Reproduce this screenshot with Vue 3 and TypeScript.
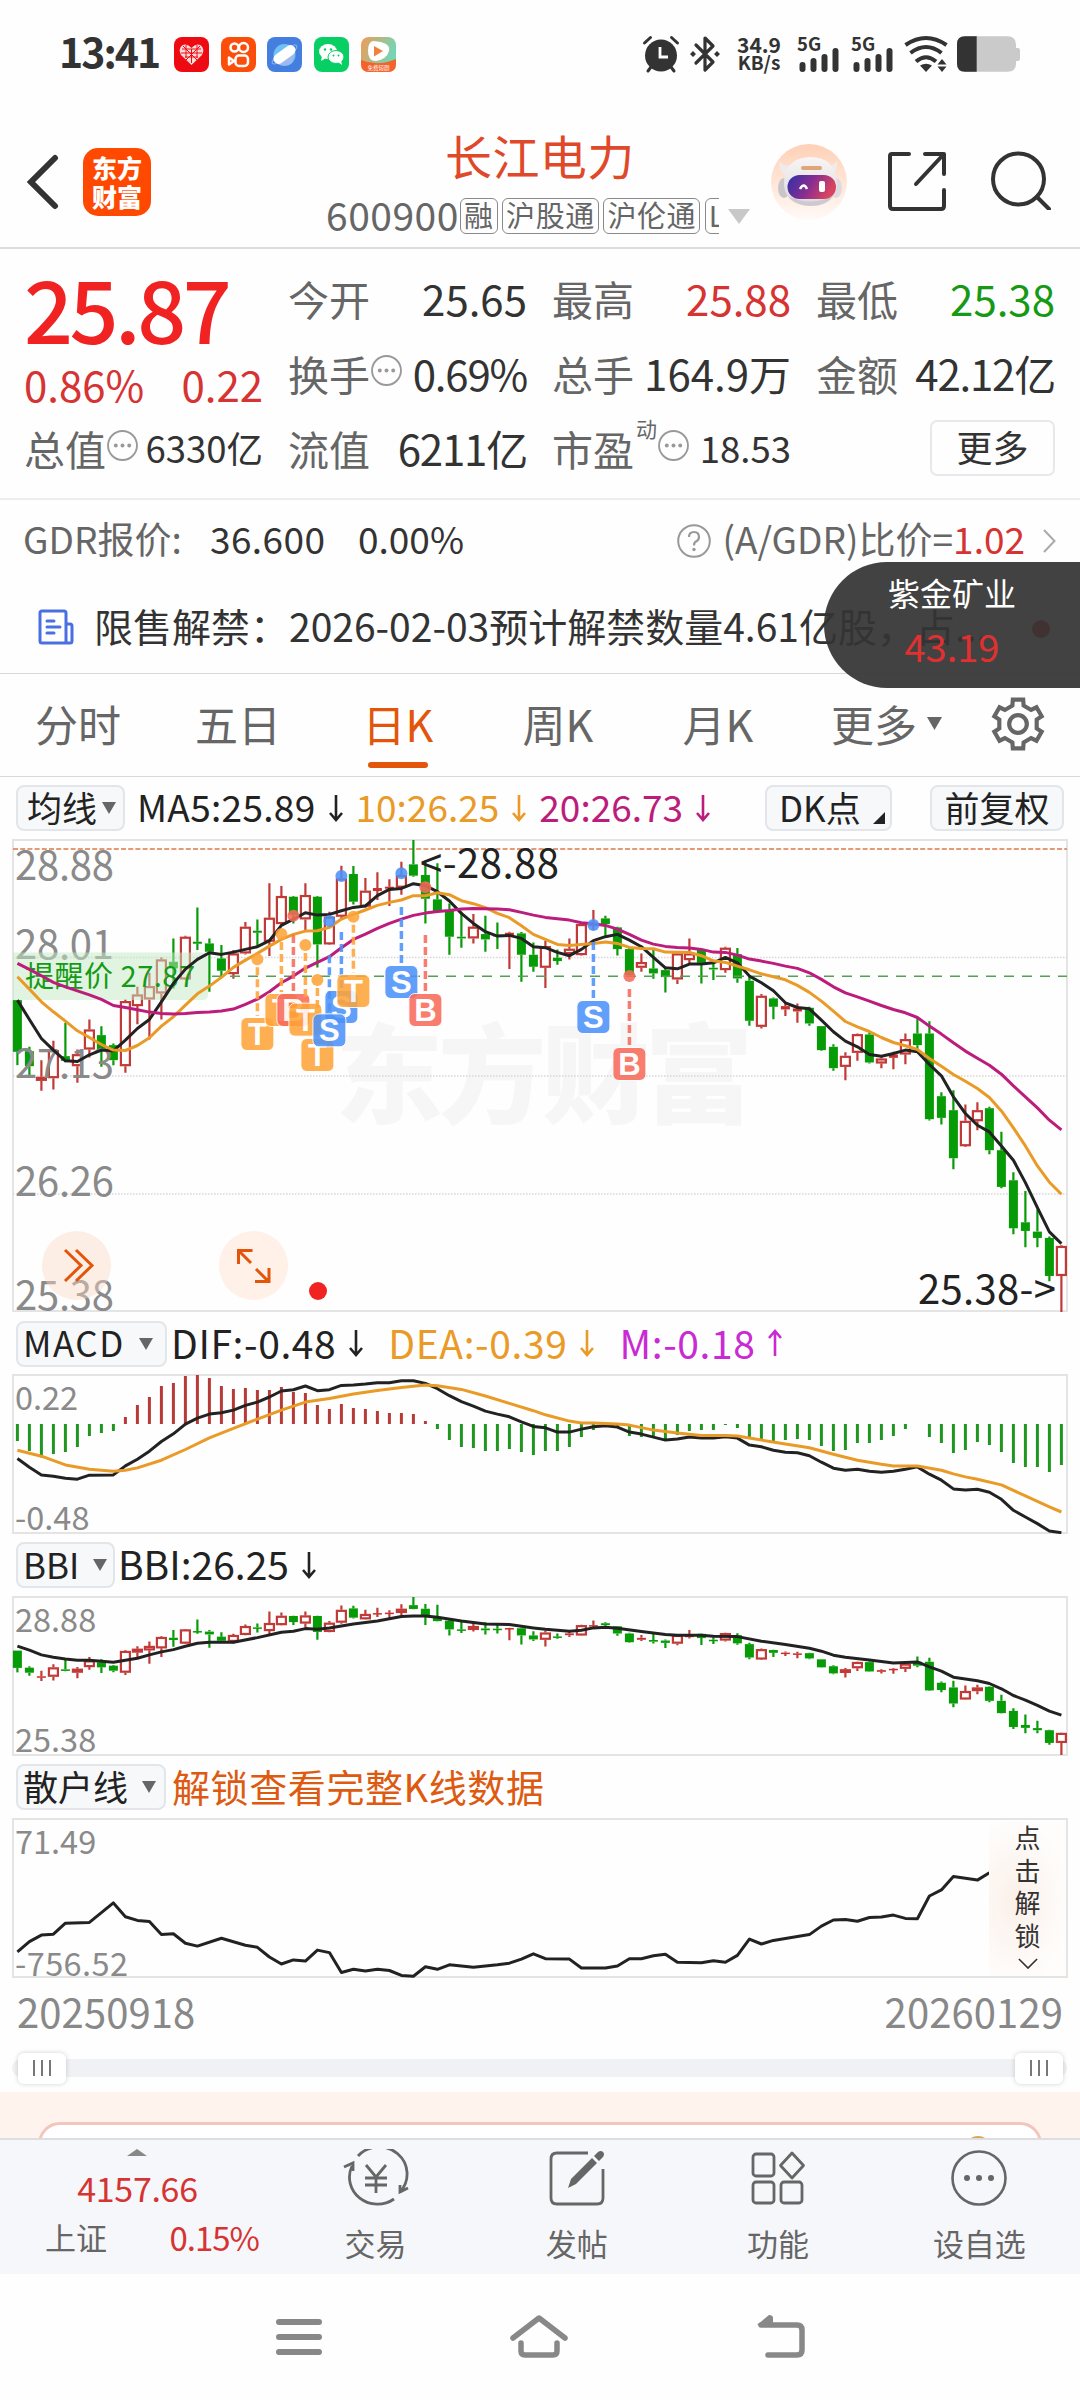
<template>
  <div class="screen">
    <header class="status">
      <span class="clock">13:41</span>
      <div class="apps">
        <svg viewBox="0 0 35 35">
          <rect width="35" height="35" rx="8" fill="#ee0a12" />
          <path
            d="M17.500 28 L7 18 Q4 12 8 8.500 Q13 5.500 17.500 11 Q22 5.500 27 8.500 Q31 12 28 18 Z"
            fill="#fbd9d9"
          />
          <path
            d="M8 12h19M7 16h21M11 20h13M12 8v13M17.500 12v14M23 8v13M9 9l14 14M26 9L12 23"
            stroke="#ee0a12"
            stroke-width="1"
            fill="none"
          />
        </svg>
        <svg viewBox="0 0 35 35">
          <rect width="35" height="35" rx="8" fill="#fb4e0b" />
          <g fill="none" stroke="#fff" stroke-width="2.500" stroke-linejoin="round">
            <circle cx="13.500" cy="10.500" r="4" />
            <circle cx="22.500" cy="10.500" r="4.500" />
            <rect x="14.500" y="18.500" width="12.500" height="10.500" rx="3.500" />
            <path d="M13 24l-5-3.500v7z" />
          </g>
        </svg>
        <svg viewBox="0 0 35 35">
          <rect width="35" height="35" rx="8" fill="#447fe0" />
          <circle cx="17.500" cy="18" r="11" fill="#6fc0f4" />
          <path d="M9 26 Q17 31 25 26 L28 15 Z" fill="#9db9ef" />
          <ellipse cx="17.500" cy="17.500" rx="15" ry="4" transform="rotate(-36 17.500 17.500)" fill="none" stroke="#8fb2ee" />
          <rect x="5" y="12.500" width="25" height="10" rx="5" transform="rotate(-36 17.500 17.500)" fill="#fff" />
        </svg>
        <svg viewBox="0 0 35 35">
          <rect width="35" height="35" rx="8" fill="#08cf63" />
          <ellipse cx="14" cy="14.500" rx="9" ry="7.500" fill="#fff" />
          <path d="M8 19l-1 5 5-3z" fill="#fff" />
          <ellipse cx="22" cy="20" rx="8" ry="6.500" fill="#fff" stroke="#08cf63" />
          <path d="M24 25l4 3-1-5z" fill="#fff" />
          <g fill="#08cf63">
            <circle cx="11" cy="12.500" r="1.200" /><circle cx="17" cy="12.500" r="1.200" />
            <circle cx="19.500" cy="18.500" r="1" /><circle cx="24.500" cy="18.500" r="1" />
          </g>
        </svg>
        <svg viewBox="0 0 35 35">
          <defs>
            <linearGradient id="video" x1="0" y1="0" x2="1" y2="0.4">
              <stop offset="0" stop-color="#f39a55" />
              <stop offset="1" stop-color="#6fd8b8" />
            </linearGradient>
          </defs>
          <rect width="35" height="35" rx="8" fill="url(#video)" />
          <path d="M0 23 Q17 30 35 22 V27 Q35 35 27 35 H8 Q0 35 0 27Z" fill="#f5622a" />
          <path d="M12 4 Q30 5 28 14 Q26 22 15 24 Q7 24 7 14 Q7 5 12 4Z" fill="#fff" />
          <path d="M13 9l9 5-9 5.500z" fill="#f0813f" />
          <text x="17.500" y="32.500" font-size="5.500" text-anchor="middle" fill="#fff">免费短剧</text>
        </svg>
      </div>
      <div class="system">
        <svg class="alarm" viewBox="0 0 36 36">
          <circle cx="18" cy="19.500" r="16" fill="#333" />
          <path d="M1.500 7l6-5.500M34.500 7l-6-5.500M5 35l3-4M31 35l-3-4" stroke="#333" stroke-width="3" stroke-linecap="round" />
          <path d="M17 11v10h8" fill="none" stroke="#fff" stroke-width="2.800" />
        </svg>
        <svg class="bluetooth" viewBox="0 0 30 36">
          <path d="M6 9l17 17-8 8V2l8 8L6 27" fill="none" stroke="#333" stroke-width="3.200" stroke-linejoin="round" stroke-linecap="round" />
          <path d="M3 15l3 3-3 3-3-3zM27 15l3 3-3 3-3-3z" fill="#333" />
        </svg>
        <div class="speed"><b>34.9</b><b>KB/s</b></div>
        <svg v-for="n in 2" :key="n" class="signal" viewBox="0 0 43 36">
          <text x="0" y="14.500" font-size="18.500" font-weight="700" fill="#333">5G</text>
          <g fill="#333">
            <rect x="2.500" y="26" width="6" height="10" rx="3" />
            <rect x="13.500" y="22" width="6" height="14" rx="3" />
            <rect x="24.500" y="18" width="6" height="18" rx="3" />
            <rect x="35.500" y="12" width="6" height="24" rx="3" />
          </g>
        </svg>
        <svg class="wifi" viewBox="0 0 44 36">
          <g fill="none" stroke="#333" stroke-width="4">
            <path d="M1.500 9 Q22 -5 42.500 9" /><path d="M6.500 17 Q22 5 37.500 17" />
            <path d="M12 25.500 Q22 17 32 25.500" />
          </g>
          <path d="M16 29.500q6-3.500 12 0l-6 6.500z M38 23l4.500 5.500h-9z M38 36l4.500-5.500h-9z" fill="#333" />
        </svg>
        <svg class="battery" viewBox="0 0 64 36">
          <path d="M0 8q0-8 8-8h43q9 0 9 9v3h2q2 0 2 3v7q0 3-2 3h-2v3q0 8-9 8H8q-8 0-8-8z" fill="#cacaca" />
          <path d="M20 0H8Q0 0 0 8v20q0 8 8 8h12z" fill="#333" />
        </svg>
      </div>
    </header>

    <nav class="titlebar">
      <svg class="back" viewBox="0 0 34 56">
        <path d="M29 4L5 28l24 24" fill="none" stroke="#333" stroke-width="6" stroke-linecap="round" />
      </svg>
      <div class="logo"><span>东方</span><span>财富</span></div>
      <div class="stock">
        <h1>长江电力</h1>
        <div class="code">
          <div class="code-clip">
            <span>600900</span>
            <i v-for="tag in stockTags" :key="tag">{{ tag }}</i>
          </div>
          <svg viewBox="0 0 22 15"><path d="M0 0h22L11 15z" fill="#c8c8c8" /></svg>
        </div>
      </div>
      <svg class="robot" viewBox="0 0 76 76">
        <defs>
          <linearGradient id="halo" x1="0" y1="0" x2="0" y2="1">
            <stop offset="0" stop-color="#ffd0b6" />
            <stop offset="1" stop-color="#fffaf7" />
          </linearGradient>
          <linearGradient id="visor" x1="0" y1="0" x2="1" y2="0.3">
            <stop offset="0" stop-color="#2c31a8" />
            <stop offset="0.55" stop-color="#8a2d90" />
            <stop offset="1" stop-color="#d84560" />
          </linearGradient>
          <linearGradient id="shell" x1="0" y1="0" x2="0" y2="1">
            <stop offset="0" stop-color="#f8f5f5" />
            <stop offset="1" stop-color="#dcd8de" />
          </linearGradient>
        </defs>
        <circle cx="38" cy="38" r="38" fill="url(#halo)" />
        <path d="M8 17q4 6 13 4l-6 10Q8 28 8 17zM66 17q-4 6-12 4l6 10q7-3 6-14z" fill="#efebec" />
        <ellipse cx="13" cy="44" rx="6" ry="10" fill="#c9c5c9" />
        <ellipse cx="65" cy="44" rx="6" ry="10" fill="#dedade" />
        <path d="M13 40Q13 14 39 13q26 0 27 27 0 20-27 22-25-1-26-22z" fill="url(#shell)" />
        <path d="M17 52q22 11 45 0-6 10-23 10-16-1-22-10z" fill="#cdc9d0" />
        <rect x="30" y="22" width="21" height="4" rx="2" fill="#dfa677" />
        <rect x="16.500" y="31" width="48.500" height="24" rx="12" fill="url(#visor)" />
        <path d="M29 45q4-7 7 0" fill="none" stroke="#fff" stroke-width="2.500" />
        <rect x="48" y="37" width="6" height="11" rx="2" fill="#fff" />
      </svg>
      <svg class="share" viewBox="0 0 58 60">
        <g fill="none" stroke="#333" stroke-width="4" stroke-linecap="round" stroke-linejoin="round">
          <path d="M21 3H4q-2 0-2 2v50q0 3 3 3h48q3 0 3-3V39" />
          <path d="M37 3h19v20M55 4L28 33" />
        </g>
      </svg>
      <svg class="search" viewBox="0 0 60 60">
        <g fill="none" stroke="#333" stroke-width="4" stroke-linecap="round">
          <circle cx="27.500" cy="29" r="25.500" /><path d="M46 47l12 12" />
        </g>
      </svg>
    </nav>

    <section class="quote">
      <div class="column">
        <strong class="price">25.87</strong>
        <p class="change"><span>0.86%</span><span>0.22</span></p>
        <p class="cell small">
          <label>总值</label><svg class="more-dots" viewBox="0 0 30 30"><use href="#dots" /></svg><span>6330亿</span>
        </p>
      </div>
      <div v-for="(column, c) of quoteColumns" :key="c" class="column">
        <p v-for="cell of column" :key="cell.label" class="cell" :class="[cell.tone, { small: cell.sup }]">
          <label>{{ cell.label }}</label>
          <sup v-if="cell.sup">{{ cell.sup }}</sup>
          <svg v-if="cell.hint" class="more-dots" viewBox="0 0 30 30"><use href="#dots" /></svg>
          <span>{{ cell.value }}</span>
        </p>
        <button v-if="c === 2" class="more">更多</button>
      </div>
      <svg width="0" height="0" class="defs">
        <symbol id="dots" viewBox="0 0 30 30">
          <circle cx="15" cy="15" r="14" fill="none" stroke="#999" stroke-width="1.800" />
          <g fill="#999"><circle cx="8.500" cy="15" r="1.900" /><circle cx="15" cy="15" r="1.900" /><circle cx="21.500" cy="15" r="1.900" /></g>
        </symbol>
      </svg>
    </section>

    <section class="gdr">
      <label>GDR报价:</label><span class="gdr-price">36.600</span><span>0.00%</span>
      <div class="ratio">
        <svg class="help" viewBox="0 0 34 34">
          <circle cx="17" cy="17" r="15.800" fill="none" stroke="#999" stroke-width="2" />
          <path d="M12 13q0-5 5-5t5 5q0 3-3 4.500-2 1-2 4" fill="none" stroke="#999" stroke-width="2.200" />
          <circle cx="17" cy="25.500" r="1.700" fill="#999" />
        </svg>
        <span>(A/GDR)比价=</span><b>1.02</b>
        <svg class="chevron" viewBox="0 0 13 24"><path d="M1 1l10.500 11L1 23" fill="none" stroke="#aaa" stroke-width="2" /></svg>
      </div>
    </section>

    <section class="news">
      <svg viewBox="0 0 36 36">
        <g fill="none" stroke="#4a6fe0" stroke-width="3" stroke-linejoin="round" stroke-linecap="round">
          <path d="M4 2h22q2 0 2 2v30H4q-2 0-2-2V4q0-2 2-2z M28 15h4q2 0 2 2v15q0 2-2 2h-4" />
          <path d="M9 12h7M9 18h13M9 24h7" />
        </g>
      </svg>
      <p>限售解禁：2026-02-03预计解禁数量4.61亿股，占...</p>
      <span class="dot"></span>
    </section>
    <aside class="floating"><span>紫金矿业</span><b>43.19</b></aside>

    <nav class="tabs">
      <button v-for="tab in tabs" :key="tab" :class="{ active: tab === activeTab }" @click="activeTab = tab">
        {{ tab }}
        <svg v-if="tab === '更多'" viewBox="0 0 15 13"><path d="M0 0h15L7.500 13z" fill="#666" /></svg>
      </button>
      <svg class="gear" viewBox="0 0 52 52">
        <g fill="none" stroke="#666" stroke-width="4">
          <path :d="gearPath" /><circle cx="26" cy="26" r="8.500" />
        </g>
      </svg>
    </nav>

    <div class="legend main-legend">
      <button class="picker tight"><span>均线</span><i class="caret"></i></button>
      <span v-for="ma in averages" :key="ma.text" class="ma" :style="{ color: ma.color }">
        {{ ma.text }}<svg class="arrow" viewBox="0 0 16 28"><path :d="arrowDown" /></svg>
      </span>
      <button class="picker dk"><span>DK点</span><i class="corner"></i></button>
      <button class="picker adjust"><span>前复权</span></button>
    </div>
    <svg class="plot" width="1056" height="474" viewBox="0 0 1056 474">
      <text class="watermark" x="323" y="276" textLength="418">东方财富</text>
      <rect class="frame" x="1" y="1" width="1054" height="471" />
      <path class="grid" d="M1 118.500H1055M1 237H1055M1 355H1055" />
      <path class="limit" d="M1 10H1055" />
      <g v-for="(candle, i) of candles" :key="i" :class="candle.up ? 'up' : 'down'">
        <path :d="wick(candle, i, 1, 472)" />
        <rect v-bind="body(candle, i, 1, 472)" />
      </g>
      <text class="axis" v-for="label of priceLabels" :key="label.text" x="3" :y="label.y" textLength="99">{{ label.text }}</text>
      <path class="alert-line" d="M200 137.300H1055" />
      <path class="alert-tag" d="M1 113.500h189q6 0 6 6v35.500q0 6-6 6H1z" />
      <text class="alert-text" x="13" y="147.500" textLength="170">提醒价 27.87</text>
      <polyline v-for="ma of averages" :key="ma.color" class="line" :points="series(ma.points, 60, 1475, 1, 472)" :stroke="ma.color" />
      <g v-for="pin of pins" :key="pin.i" opacity="0.87">
        <circle :cx="x(pin.i)" :cy="px(pin.dot)" r="6" :fill="pinColors[pin.kind]" />
        <path
          :d="`M${x(pin.i)} ${Math.max(px(pin.dot) + 8, px(pin.badge) - 75)}V${px(pin.badge) - 18}`"
          :stroke="pinColors[pin.kind]"
          stroke-width="3.500"
          stroke-dasharray="8 4"
        />
        <rect :x="x(pin.i) - 16.500" :y="px(pin.badge) - 16.500" width="33" height="33" rx="6" :fill="pinColors[pin.kind]" stroke="#fff" />
        <text class="pin-text" :x="x(pin.i)" :y="px(pin.badge) + 11">{{ pin.kind }}</text>
      </g>
      <text class="extreme" x="408" y="39" textLength="139">&lt;-28.88</text>
      <text class="extreme" x="906" y="465" textLength="138">25.38-&gt;</text>
      <g fill="none" stroke="#e2550a" stroke-width="3">
        <circle cx="64.500" cy="426.500" r="34.500" fill="#fdd8c4" fill-opacity="0.42" stroke="none" />
        <circle cx="241.500" cy="426.500" r="34.500" fill="#fff0e8" stroke="none" />
        <path d="M53 411l16 15.500-16 15.500M64 411l16 15.500-16 15.500" />
        <path d="M226.500 425v-13.500h14M227 412l12 12M257 429v13.500h-14M256 442l-12-12" />
      </g>
      <circle cx="306" cy="452" r="9" fill="#f02222" />
    </svg>

    <div class="legend macd-legend">
      <button class="picker macd"><span>MACD</span><i class="caret"></i></button>
      <span v-for="item in macdLegend" :key="item.text" class="value" :style="{ color: item.color }">
        {{ item.text }}<svg class="arrow" viewBox="0 0 16 28"><path :d="item.rising ? arrowUp : arrowDown" /></svg>
      </span>
    </div>
    <svg class="plot" width="1056" height="160" viewBox="0 0 1056 160">
      <rect class="frame" x="1" y="1" width="1054" height="158" />
      <text class="axis minor" x="3" y="35.500">0.22</text>
      <text class="axis minor" x="3" y="155.500">-0.48</text>
      <path
        v-for="(bar, i) of macdBars"
        :key="i"
        :d="`M${x(i)} 50V${1 + (bar - 195) / 3}`"
        :stroke="bar < 342 ? '#b83a36' : '#1f961f'"
        stroke-width="3"
      />
      <polyline class="line" :points="series(dif, 195, 668, 1, 158)" stroke="#222" />
      <polyline class="line" :points="series(dea, 195, 668, 1, 158)" stroke="#ea9a26" />
    </svg>

    <div class="legend">
      <button class="picker bbi"><span>BBI</span><i class="caret"></i></button>
      <span class="value">BBI:26.25<svg class="arrow" viewBox="0 0 16 28"><path :d="arrowDown" /></svg></span>
    </div>
    <svg class="plot" width="1056" height="160" viewBox="0 0 1056 160">
      <rect class="frame" x="1" y="1" width="1054" height="158" />
      <text class="axis minor" x="3" y="35.500">28.88</text>
      <text class="axis minor" x="3" y="155.500">25.38</text>
      <g v-for="(candle, i) of candles" :key="i" :class="candle.up ? 'up' : 'down'">
        <path :d="wick(candle, i, 1, 158)" />
        <rect v-bind="body(candle, i, 1, 158)" />
      </g>
      <polyline class="line" :points="series(bbi, 860, 1335, 1, 158)" stroke="#222" />
    </svg>

    <div class="legend">
      <button class="picker"><span>散户线</span><i class="caret"></i></button>
      <span class="unlock">解锁查看完整K线数据</span>
    </div>
    <div class="retail">
      <svg class="plot" width="1056" height="160" viewBox="0 0 1056 160">
        <rect class="frame" x="1" y="1" width="1054" height="158" />
        <text class="axis minor" x="3" y="36">71.49</text>
        <text class="axis minor" x="3" y="157.500" textLength="113">-756.52</text>
        <polyline class="line" :points="series(retail, 144, 532, 1, 158)" stroke="#222" />
      </svg>
      <div class="locked">
        <span v-for="ch in '点击解锁'" :key="ch">{{ ch }}</span>
        <svg viewBox="0 0 22 12"><path d="M1 1l10 10L21 1" fill="none" stroke="#333" stroke-width="1.800" /></svg>
      </div>
    </div>

    <div class="dates"><span>20250918</span><span>20260129</span></div>
    <div class="range">
      <span class="handle"><i></i><i></i><i></i></span>
      <span class="handle"><i></i><i></i><i></i></span>
    </div>
    <div class="promo"><div class="promo-card"><i></i></div></div>

    <footer class="actions">
      <div class="index">
        <i class="up-caret"></i>
        <b>4157.66</b>
        <p><span>上证</span><em>0.15%</em></p>
      </div>
      <div class="action">
        <svg viewBox="0 0 66 58">
          <g fill="none" stroke="#666" stroke-width="2.800">
            <path d="M15 7A28 27 0 0 1 57 43M51 50A28 27 0 0 1 9 17" />
            <path d="M1 18l9-4v8M65 39l-8 4v-7" />
            <path d="M23 16l10 12 10-12M33 28v16M22 29h22M22 36h22" />
          </g>
        </svg>
        交易
      </div>
      <div class="action">
        <svg viewBox="0 0 66 58">
          <g fill="none" stroke="#666" stroke-width="2.800">
            <path d="M44 4H13q-6 0-6 6v39q0 6 6 6h40q6 0 6-6V20" />
          </g>
          <path d="M24 39l3-9L48 9l5 5-21 21zM50 7l4-4q3-2 5 0t0 5l-4 4z" fill="#666" />
        </svg>
        发帖
      </div>
      <div class="action">
        <svg viewBox="0 0 66 58">
          <g fill="none" stroke="#666" stroke-width="2.800">
            <rect x="8" y="5" width="21" height="22" rx="3" />
            <rect x="8" y="33" width="21" height="21" rx="3" />
            <rect x="36" y="33" width="21" height="21" rx="3" />
            <path d="M47 4l11.500 12.500L47 29 35.500 16.500z" stroke-linejoin="round" />
          </g>
        </svg>
        功能
      </div>
      <div class="action">
        <svg viewBox="0 0 66 58">
          <circle cx="33" cy="29" r="26.500" fill="none" stroke="#666" stroke-width="2.600" />
          <g fill="#666"><circle cx="21" cy="29" r="3" /><circle cx="33" cy="29" r="3" /><circle cx="45" cy="29" r="3" /></g>
        </svg>
        设自选
      </div>
    </footer>

    <nav class="android">
      <svg width="46" height="46" viewBox="0 0 46 46">
        <path d="M3 8h40M3 23h40M3 38h40" stroke="#888" stroke-width="6" stroke-linecap="round" />
      </svg>
      <svg width="58" height="46" viewBox="0 0 58 46">
        <g fill="none" stroke="#888" stroke-width="5.500" stroke-linecap="round" stroke-linejoin="round">
          <path d="M3 24L29 4l26 20M11 29v8q0 4 4 4h28q4 0 4-4v-8" />
        </g>
      </svg>
      <svg width="50" height="46" viewBox="0 0 50 46">
        <g fill="none" stroke="#888" stroke-width="5.500" stroke-linecap="round" stroke-linejoin="round">
          <path d="M12 41h29q5 0 5-5V16q0-5-5-5H5" />
        </g>
        <path d="M1 11L13 1q4 0 4 3v8z" fill="#888" />
      </svg>
    </nav>
  </div>
</template>

<script setup lang="ts">
import { ref } from "vue";

interface Candle {
  up: boolean;
  high: number;
  top: number;
  bottom: number;
  low: number;
}
interface QuoteCell {
  label: string;
  value: string;
  tone?: string;
  hint?: boolean;
  sup?: string;
}

const stockTags = ["融", "沪股通", "沪伦通", "LOF"];
const tabs = ["分时", "五日", "日K", "周K", "月K", "更多"];
const activeTab = ref("日K");

const quoteColumns: QuoteCell[][] = [
  [
    { label: "今开", value: "25.65" },
    { label: "换手", value: "0.69%", hint: true, tone: "tight-value" },
    { label: "流值", value: "6211亿", tone: "tight-value" },
  ],
  [
    { label: "最高", value: "25.88", tone: "red" },
    { label: "总手", value: "164.9万" },
    { label: "市盈", value: "18.53", sup: "动", hint: true },
  ],
  [
    { label: "最低", value: "25.38", tone: "green" },
    { label: "金额", value: "42.12亿", tone: "tight-value" },
  ],
];

const arrowDown = "M8 1v25M2 19l6 7 6-7";
const arrowUp = "M8 27V2M2 9l6-7 6 7";

// Six teeth: two points on the tip, two in the valley after it
const gearPath =
  Array.from({ length: 6 }, (_, k) => {
    const at = (deg: number, r: number) => {
      const a = ((k * 60 + deg - 90) * Math.PI) / 180;
      return `${(26 + r * Math.cos(a)).toFixed(1)} ${(26 + r * Math.sin(a)).toFixed(1)}`;
    };
    return `${k ? "L" : "M"}${at(-12, 24)}L${at(12, 24)}L${at(17, 18.5)}L${at(43, 18.5)}`;
  }).join("") + "Z";

// Chart units run downwards: 60 is the period high (28.88), 1475 the low (25.38)
const UNIT_TOP = 60,
  UNIT_BOTTOM = 1475;

// direction, high, body top, body bottom, low
const candles: Candle[] = `
G 540 540 695 735|G 680 693 738 765|R 720 770 782 812|R 662 690 774 808|G 608 708 722 726|R 688 702 738 788
R 598 628 688 712|G 618 645 690 740|G 670 675 720 735|R 538 543 738 758|R 500 523 558 612|R 458 498 538 658
R 412 418 520 598|G 355 425 445 505|R 347 350 478 480|G 262 365 371 390|G 355 370 395 515|G 375 415 452 470
R 390 400 462 476|R 306 320 400 403|G 298 332 338 378|R 190 293 365 408|R 198 228 312 316|G 228 230 285 310
R 190 225 298 335|G 228 230 373 442|R 275 290 373 375|R 137 175 290 300|G 138 162 245 253|R 174 212 260 262
R 157 204 213 240|R 178 200 206 258|R 125 165 203 224|G 60 133 167 170|G 122 165 236 310|G 130 238 276 278
G 250 272 350 404|G 275 350 355 383|R 282 320 355 370|G 287 342 358 395|G 307 344 349 387|R 335 338 346 447
G 336 340 404 485|G 367 404 440 455|R 362 378 443 504|G 388 413 423 434|R 355 386 402 418|R 308 312 405 406
R 270 312 318 330|G 287 295 312 347|G 320 322 387 406|G 380 387 465 470|R 400 426 443 455|G 390 445 460 476
G 440 450 471 517|R 395 400 478 492|R 355 400 420 432|G 387 390 428 490|G 420 443 448 480|R 380 383 450 458
G 384 402 475 488|G 470 482 602 617|R 522 527 620 625|G 532 535 560 597|R 548 558 568 588|R 550 565 574 608
G 560 563 610 617|G 618 618 690 692|G 672 680 744 752|R 696 707 740 780|R 640 642 698 722|G 638 643 727 730
R 708 715 730 744|R 695 703 713 747|R 640 657 703 732|G 592 640 675 690|G 603 640 897 901|G 816 828 893 913
G 810 870 1014 1047|R 853 902 978 980|R 846 870 903 930|G 860 864 990 1002|G 935 990 1100 1104|G 1056 1080 1224 1242
G 1112 1206 1232 1281|G 1168 1234 1253 1281|G 1249 1253 1367 1383|R 1275 1277 1367 1475`
  .trim()
  .split(/[|\n]/)
  .map((row) => {
    const [kind, ...v] = row.split(" ");
    const [high, top, bottom, low] = v.map(Number);
    return { up: kind === "R", high, top, bottom, low };
  });

// Every series below is a list of "candle index,value"; gaps are interpolated by the line
const ma5 =
  "0,540 1,598 2,655 3,690 4,722 5,724 6,704 7,690 8,692 9,660 10,625 11,598 12,545 13,490 14,447 15,418 16,398 17,403 18,396 19,388 20,380 21,362 22,316 23,297 24,278 25,285 26,283 27,272 28,262 29,258 30,227 31,208 32,205 33,191 34,197 35,215 36,243 37,280 38,310 39,335 40,348 41,346 42,355 43,380 44,383 45,397 46,407 47,388 48,362 49,350 50,343 51,360 52,380 53,412 54,443 55,446 56,432 57,432 58,428 59,412 60,428 61,468 62,488 63,512 64,548 65,562 66,566 67,600 68,635 69,663 70,680 71,703 72,708 73,700 74,690 75,695 76,733 77,767 78,830 79,880 80,915 81,935 82,977 83,1020 84,1087 85,1162 86,1235 87,1270";
const ma10 =
  "0,470 1,507 2,545 3,575 4,603 5,632 6,652 7,673 8,690 9,691 10,676 11,653 12,618 13,590 14,555 15,521 16,498 17,472 18,442 19,420 20,400 21,378 22,358 23,343 24,333 25,332 26,322 27,297 28,283 29,270 30,256 31,247 32,240 33,227 34,227 35,218 36,224 37,242 38,251 39,263 40,280 41,293 42,317 43,343 44,358 45,373 46,376 47,373 48,370 49,366 50,370 51,382 52,385 53,386 54,396 56,397 57,407 58,422 59,427 60,438 61,449 62,461 63,470 64,479 65,496 66,517 67,543 68,573 69,604 70,620 71,634 72,652 73,667 74,677 75,688 76,715 77,738 78,763 79,783 80,805 81,832 82,872 83,923 84,977 85,1037 86,1086 87,1122";
const ma20 =
  "0,430 1,448 2,467 3,487 4,500 5,512 6,524 7,538 8,556 9,562 10,569 11,576 12,580 13,582 14,580 15,577 16,576 17,573 18,567 19,553 20,537 21,515 22,488 23,468 24,444 25,427 26,410 27,383 28,358 29,342 30,325 31,310 32,297 33,286 34,279 35,274 36,271 37,267 38,265 40,267 41,269 42,277 43,285 44,292 45,296 46,300 47,308 48,311 49,316 50,327 51,343 52,360 53,372 54,379 55,382 56,384 57,388 58,396 59,397 60,405 61,417 62,423 63,430 64,438 65,445 66,458 67,478 68,500 69,518 70,530 71,543 72,556 73,568 74,578 75,592 76,618 77,642 78,668 79,693 80,714 81,735 82,762 83,797 84,830 85,863 86,900 87,929";
const dif =
  "0,445 1,471 2,494 3,498 4,504 5,507 6,495 8,494 9,467 10,447 11,423 12,394 13,371 14,342 15,324 16,312 17,308 18,300 19,286 20,276 21,261 22,243 23,239 24,228 25,242 26,239 27,226 28,225 29,222 30,218 31,218 32,212 33,212 34,220 35,236 36,257 37,275 38,288 39,303 40,312 41,320 42,335 43,349 44,353 45,366 46,366 47,357 48,350 49,347 50,351 51,366 52,372 53,381 54,390 55,387 56,381 57,384 58,384 59,380 60,384 61,405 62,410 63,420 64,426 65,428 66,437 67,456 68,474 69,480 70,477 71,483 72,486 73,483 74,477 75,470 76,492 77,510 78,536 79,539 80,537 81,546 82,567 83,600 84,620 85,640 86,662 87,667";
const dea =
  "0,420 2,438 4,464 6,477 8,483 9,480 10,473 12,450 14,418 16,383 18,355 20,327 22,300 24,276 26,265 28,252 30,241 32,232 34,225 35,227 37,238 39,258 41,280 43,302 44,314 46,333 47,339 48,339 50,342 51,345 53,360 55,369 57,376 59,376 60,378 62,390 64,402 66,413 68,432 70,450 72,462 73,467 75,467 77,480 78,491 79,500 80,507 82,524 84,557 86,590 87,605";
const bbi =
  "0,1008 1,1020 2,1034 3,1041 4,1046 5,1050 6,1050 7,1053 8,1056 9,1050 10,1044 11,1034 12,1025 13,1018 14,1008 15,999 16,996 18,996 20,982 22,966 23,963 24,955 25,957 26,953 28,941 30,932 32,919 33,917 34,917 35,921 37,932 39,941 41,943 43,953 44,957 46,963 47,960 48,953 49,951 50,954 52,964 54,973 55,975 57,975 58,978 60,979 62,993 64,1003 66,1014 67,1023 68,1035 69,1041 71,1049 73,1058 75,1055 76,1070 77,1083 78,1101 80,1112 81,1120 82,1136 83,1156 84,1170 85,1186 86,1203 87,1215";
const retail =
  "0,470 1,445 2,429 3,427 4,400 6,398 7,374 8,350 9,384 10,393 11,396 12,428 13,426 14,449 15,456 17,437 19,454 20,459 21,483 22,500 23,490 24,493 25,466 26,472 27,521 28,513 29,517 30,513 31,516 32,528 33,530 34,507 35,513 36,502 38,508 40,502 41,498 42,488 43,475 44,487 46,488 47,510 49,510 50,505 51,487 52,487 53,480 54,476 55,496 57,497 58,492 59,496 60,479 61,439 62,451 63,442 66,428 67,407 68,392 69,391 70,395 71,386 72,385 73,380 74,388 75,389 76,333 77,318 78,285 80,294 81,276";
const macdBars = [
  393, 423, 442, 432, 426, 411, 378, 369, 363, 321, 285, 261, 228, 219, 198,
  195, 204, 228, 237, 234, 240, 240, 231, 246, 249, 285, 297, 282, 294, 297,
  303, 309, 309, 312, 333, 357, 390, 411, 414, 423, 423, 417, 426, 435, 423,
  423, 411, 381, 360, 345, 354, 378, 381, 381, 390, 375, 363, 360, 360, 345,
  354, 384, 387, 393, 390, 387, 390, 408, 423, 420, 399, 399, 390, 378, 357,
  342, 381, 399, 429, 420, 396, 405, 426, 459, 471, 471, 486, 465,
];

const averages = [
  { text: "MA5:25.89", color: "#222", points: ma5 },
  { text: "10:26.25", color: "#ea9a26", points: ma10 },
  { text: "20:26.73", color: "#bc1c7c", points: ma20 },
];
const macdLegend = [
  { text: "DIF:-0.48", color: "#222", rising: false },
  { text: "DEA:-0.39", color: "#ea9a26", rising: false },
  { text: "M:-0.18", color: "#c92bd3", rising: true },
];
const priceLabels = [
  { text: "28.88", y: 40.5 },
  { text: "28.01", y: 120 },
  { text: "27.13", y: 238.5 },
  { text: "26.26", y: 356.5 },
  { text: "25.38", y: 470.5 },
];

const pinColors: Record<string, string> = {
  T: "#ffa438",
  B: "#f96a5a",
  S: "#4c92fa",
};
const pins = [
  { kind: "T", i: 20, dot: 418, badge: 642 },
  { kind: "T", i: 22, dot: 342, badge: 570 },
  { kind: "B", i: 23, dot: 287, badge: 570 },
  { kind: "T", i: 24, dot: 375, badge: 599 },
  { kind: "T", i: 25, dot: 480, badge: 705 },
  { kind: "S", i: 27, dot: 168, badge: 561 },
  { kind: "S", i: 26, dot: 303, badge: 631 },
  { kind: "T", i: 28, dot: 290, badge: 513 },
  { kind: "S", i: 32, dot: 160, badge: 486 },
  { kind: "B", i: 34, dot: 202, badge: 570 },
  { kind: "S", i: 48, dot: 315, badge: 591 },
  { kind: "B", i: 51, dot: 468, badge: 732 },
];

function x(i: number): number {
  return 5.4 + i * 12;
}
function px(unit: number): number {
  return 1 + (unit - UNIT_TOP) / 3;
}
function y(unit: number, top: number, height: number): number {
  return top + ((unit - UNIT_TOP) / (UNIT_BOTTOM - UNIT_TOP)) * height;
}
function wick(c: Candle, i: number, top: number, height: number): string {
  const at = (unit: number) => y(unit, top, height);
  return `M${x(i)} ${at(c.high)}V${at(c.top)}M${x(i)} ${at(c.bottom)}V${at(c.low)}`;
}
function body(c: Candle, i: number, top: number, height: number) {
  const from = y(c.top, top, height);
  const size = Math.max(y(c.bottom, top, height) - from, 1.5);
  const inset = c.up && size > 3.5 ? 1 : 0;
  return {
    x: x(i) - 4.5,
    y: from + inset,
    width: 9,
    height: size - inset * 2,
    class: inset ? "hollow" : "solid",
  };
}
function series(points: string, from: number, to: number, top: number, height: number): string {
  return points
    .split(" ")
    .map((pair) => {
      const [i, v] = pair.split(",").map(Number);
      return `${x(i)},${(top + ((v - from) / (to - from)) * height).toFixed(1)}`;
    })
    .join(" ");
}
</script>

<style>
body {
  background: #fff;
}
</style>

<style scoped>
.screen {
  width: 1080px;
  height: 2400px;
  position: relative;
  overflow: hidden;
  background: #fefefe;
  color: #333;
  font-family: "Noto Sans CJK SC", "Noto Sans", sans-serif;
}
.screen p,
.screen h1 {
  margin: 0;
  font-weight: 400;
}
button {
  border: none;
  background: none;
  padding: 0;
  font: inherit;
  color: inherit;
}
i,
em {
  font-style: normal;
}
svg {
  display: block;
  flex: none;
}
.status {
  height: 108px;
  display: flex;
  align-items: center;
  padding: 0 60px 0 59px;
  box-sizing: border-box;
}
.clock {
  width: 115px;
  font: 700 41px/60px "Noto Sans CJK SC", sans-serif;
  letter-spacing: -2px;
  margin-top: -8px;
}
.apps {
  display: flex;
  gap: 11.700px;
}
.apps svg {
  width: 35px;
  height: 35px;
}
.system {
  margin-left: auto;
  display: flex;
  align-items: center;
}
.system svg {
  height: 36px;
  overflow: visible;
}
.alarm {
  width: 36px;
}
.bluetooth {
  width: 30px;
  margin-left: 11px;
}
.speed {
  width: 48px;
  margin-left: 15px;
  display: flex;
  flex-direction: column;
  align-items: center;
  font-size: 21px;
  line-height: 18px;
  margin-top: -3px;
}
.speed b + b {
  font-size: 19px;
}
.signal {
  width: 43px;
  margin-left: 11px;
}
.speed + .signal {
  margin-left: 14px;
}
.wifi {
  width: 44px;
  margin-left: 10px;
}
.battery {
  width: 63px;
  margin-left: 9px;
}
.titlebar {
  height: 141px;
  box-sizing: border-box;
  border-bottom: 2px solid #dcdcdc;
  display: flex;
  align-items: flex-start;
}
.back {
  width: 34px;
  height: 56px;
  margin: 46px 0 0 26px;
}
.logo {
  width: 68px;
  height: 68px;
  margin: 40px 0 0 23px;
  border-radius: 15px;
  background: #ff4800;
  color: #fff;
  display: flex;
  flex-direction: column;
  align-items: center;
  justify-content: center;
  font-size: 25px;
  font-weight: 900;
  line-height: 29px;
}
.stock {
  width: 425px;
  margin-left: 175px;
}
.stock h1 {
  padding-left: 119px;
  margin-top: 15px;
  font-size: 47px;
  line-height: 64px;
  letter-spacing: 0.4px;
  color: #e0482a;
}
.code {
  display: flex;
  align-items: center;
  margin-top: 7px;
  color: #666;
}
.code-clip {
  width: 393px;
  height: 44px;
  display: flex;
  align-items: center;
  overflow: hidden;
  white-space: nowrap;
}
.code span {
  font-size: 39px;
  line-height: 44px;
  width: 134px;
  letter-spacing: 0.5px;
  flex: none;
  margin-top: -5px;
}
.code i {
  height: 36px;
  box-sizing: border-box;
  border: 1.500px solid #8a8a8a;
  border-radius: 6px;
  font-size: 29px;
  line-height: 31px;
  letter-spacing: 0.6px;
  padding: 0 3px;
  margin-right: 4.500px;
}
.code svg {
  width: 22px;
  height: 15px;
  margin-left: 9px;
}
.robot {
  width: 76px;
  height: 76px;
  margin: 36px 0 0 20px;
}
.share {
  width: 58px;
  height: 60px;
  margin: 43px 0 0 41px;
}
.search {
  width: 60px;
  height: 60px;
  margin: 42px 0 0 45px;
}
.quote {
  height: 251px;
  padding: 13px 24px 0 24px;
  box-sizing: border-box;
  display: grid;
  grid-template-columns: 239px repeat(3, 239px);
  column-gap: 25px;
  border-bottom: 2px solid #ededed;
}
.defs {
  position: absolute;
}
.column {
  display: flex;
  flex-direction: column;
}
.price {
  height: 96px;
  font-size: 86px;
  font-weight: 500;
  line-height: 90px;
  letter-spacing: -3.500px;
  color: #f02222;
}
.change {
  height: 54px;
  display: flex;
  justify-content: space-between;
  color: #d63333;
  font-size: 42px;
  line-height: 52px;
}
.cell {
  height: 75px;
  display: flex;
  align-items: center;
  white-space: nowrap;
  line-height: 68px;
  padding-bottom: 4px;
  box-sizing: border-box;
}
.cell label {
  color: #666;
  font-size: 41px;
}
.cell span {
  margin-left: auto;
  font-size: 42px;
}
.cell.tight-value span {
  letter-spacing: -1.200px;
}
.cell.small span {
  font-size: 36.500px;
}
.cell sup {
  font-size: 21px;
  line-height: 22px;
  margin: -40px 0 0 2px;
  color: #666;
}
.cell.red span {
  color: #d63333;
}
.cell.green span {
  color: #169a16;
}
.more-dots {
  width: 31px;
  height: 31px;
  margin: -4px 0 0 1px;
}
.more {
  align-self: flex-end;
  width: 125px;
  height: 56px;
  margin-top: 8px;
  border: 2px solid #e6e8ea;
  border-radius: 7px;
  font-size: 36px;
  line-height: 44px;
  padding-bottom: 5px;
}
.gdr {
  height: 84px;
  display: flex;
  align-items: center;
  padding: 0 24px 0 23px;
  font-size: 37px;
  line-height: 60px;
}
.gdr > label,
.gdr > span {
  margin-top: -8px;
}
.gdr label {
  color: #666;
  width: 187px;
}
.gdr-price {
  width: 148px;
  letter-spacing: 0.4px;
}
.ratio {
  margin-left: auto;
  margin-top: -2px;
  display: flex;
  align-items: center;
  color: #666;
}
.ratio span,
.ratio b {
  margin-top: -6px;
}
.ratio b {
  color: #d63333;
  font-weight: 400;
}
.help {
  width: 34px;
  height: 34px;
  margin-right: 12px;
}
.chevron {
  width: 13px;
  height: 24px;
  margin-left: 18px;
}
.news {
  height: 89px;
  display: flex;
  align-items: center;
  padding-left: 38px;
  border-bottom: 1px solid #d8d8d8;
}
.news svg {
  width: 36px;
  height: 36px;
  margin-top: -4px;
}
.news p {
  width: 936px;
  margin-left: 20px;
  font-size: 39px;
  line-height: 60px;
  margin-top: -8px;
  white-space: nowrap;
}
.news .dot {
  width: 18px;
  height: 18px;
  border-radius: 50%;
  background: #f02222;
  flex: none;
  margin-left: 2px;
}
/* Pinned quote that floats above the page at the right edge */
.floating {
  position: absolute;
  top: 562px;
  right: 0;
  width: 256px;
  height: 126px;
  border-radius: 63px 0 0 63px;
  background: rgba(52, 52, 52, 0.93);
  display: flex;
  flex-direction: column;
  align-items: center;
  color: #fff;
  font-size: 32px;
  line-height: 60px;
}
.floating b {
  color: #e03030;
  font-weight: 400;
  font-size: 38px;
  line-height: 48px;
}
.tabs {
  height: 102px;
  border-bottom: 1px solid #d8d8d8;
  display: flex;
  align-items: center;
  color: #666;
}
.tabs button {
  width: 160px;
  height: 102px;
  font-size: 43px;
  line-height: 95px;
  padding: 0 4px 3px 0;
  box-sizing: border-box;
  display: flex;
  justify-content: center;
  align-items: center;
  gap: 10px;
  position: relative;
}
.tabs button svg {
  width: 15px;
  height: 13px;
}
.tabs button:nth-child(6) {
  padding-left: 17px;
}
.tabs .active {
  color: #e2550a;
}
.tabs .active::after {
  content: "";
  position: absolute;
  left: 48px;
  bottom: 8px;
  width: 60px;
  height: 6px;
  border-radius: 3px;
  background: #e2550a;
}
.gear {
  width: 54px;
  height: 54px;
  margin: -3px 0 0 31px;
}
.legend {
  height: 62px;
  display: flex;
  align-items: center;
  padding: 0 16px;
  color: #222;
  white-space: nowrap;
}
.macd-legend {
  height: 61px;
}
.picker {
  height: 46px;
  box-sizing: border-box;
  border: 2px solid #e2e5e9;
  border-radius: 8px;
  background: #f6f8fa;
  padding: 0 8px 0 5px;
  font-size: 35px;
  line-height: 38px;
  display: flex;
  align-items: center;
}
.picker span {
  margin-top: -3px;
}
.picker.macd {
  width: 151px;
  letter-spacing: 1.500px;
}
.picker.bbi {
  width: 99px;
}
.caret {
  border: 7.500px solid transparent;
  border-top: 12px solid #666;
  border-bottom: 0;
  margin-left: 14px;
}
.tight {
  padding: 0 7px 0 9px;
}
.tight .caret {
  margin-left: 5px;
}
.ma {
  font-size: 37px;
  line-height: 50px;
  display: flex;
  align-items: center;
  margin-left: 12px;
  padding-bottom: 4px;
}
.tight + .ma {
  letter-spacing: 0.3px;
}
.arrow {
  width: 16px;
  height: 28px;
  margin: 3px 0 0 12px;
  fill: none;
  stroke: currentColor;
  stroke-width: 2.600;
}
.dk {
  width: 127px;
  margin-left: auto;
  padding-left: 12px;
}
.corner {
  border-left: 12px solid transparent;
  border-bottom: 12px solid #222;
  margin: 20px 0 0 12px;
}
.adjust {
  width: 134px;
  margin-left: 38px;
  padding: 0;
  justify-content: center;
}
.value {
  font-size: 39px;
  line-height: 50px;
  display: flex;
  align-items: center;
  padding-bottom: 4px;
  margin: 0 17px 0 3px;
}
.macd-legend .value {
  margin: 0 20px 0 4px;
  letter-spacing: 0.6px;
}
.unlock {
  margin-left: 6px;
  padding-bottom: 3px;
  font-size: 38px;
  line-height: 50px;
  letter-spacing: 0.6px;
  color: #dd5a10;
}
.plot {
  margin-left: 12px;
}
.frame {
  fill: none;
  stroke: #e4e4e4;
  stroke-width: 2;
}
.grid {
  stroke: #d8d8d8;
  stroke-width: 1.500;
  stroke-dasharray: 1.500 1.500;
}
.limit {
  stroke: #dd7a4a;
  stroke-width: 1.500;
  stroke-dasharray: 5 2.200;
}
.watermark {
  font-size: 108px;
  font-weight: 900;
  fill: #f6f6f6;
}
.axis {
  font-size: 40px;
  fill: #8a8a8a;
}
.axis.minor {
  font-size: 32.500px;
}
.extreme {
  font-size: 40px;
  fill: #222;
}
.line {
  fill: none;
  stroke-width: 3;
  stroke-linejoin: round;
}
.alert-line {
  stroke: #55a055;
  stroke-width: 1.400;
  stroke-dasharray: 10 8;
}
.alert-tag {
  fill: rgba(196, 234, 196, 0.5);
}
.alert-text {
  font-size: 29px;
  fill: #169a16;
}
.up path {
  stroke: #c23a38;
  stroke-width: 2.200;
}
.up .hollow {
  fill: #fff;
  stroke: #c23a38;
  stroke-width: 2.200;
}
.up .solid {
  fill: #c8302c;
}
.down path {
  stroke: #079c07;
  stroke-width: 2.200;
}
.down rect {
  fill: #079c07;
}
.pin-text {
  font: 700 31px "Liberation Sans", sans-serif;
  fill: #fff;
  text-anchor: middle;
}
.retail {
  position: relative;
}
.locked {
  position: absolute;
  right: 14px;
  top: 3px;
  width: 77px;
  height: 155px;
  display: flex;
  flex-direction: column;
  align-items: center;
  font-size: 26px;
  line-height: 32.700px;
  background: radial-gradient(ellipse at 35% 52%, #fbf0e9, #fefdfc 75%);
}
.locked svg {
  width: 20px;
  height: 11px;
  margin-top: 6px;
}
.dates {
  height: 74px;
  display: flex;
  justify-content: space-between;
  padding: 0 17px 0 17px;
  font-size: 40px;
  line-height: 66px;
  letter-spacing: 0.1px;
  color: #888;
}
.range {
  height: 18px;
  margin: 7px 13px 15px 12px;
  padding: 0 4px 0 6px;
  border-radius: 9px;
  background: #f0f1f4;
  display: flex;
  align-items: center;
  justify-content: space-between;
}
.handle {
  width: 48px;
  height: 31px;
  border-radius: 6px;
  background: #fff;
  box-shadow: 0 0 5px rgba(0, 0, 0, 0.18);
  display: flex;
  align-items: center;
  justify-content: center;
  gap: 6px;
}
.handle i {
  width: 2px;
  height: 16px;
  background: #777;
}
.promo {
  height: 46px;
  background: #fff3ee;
  overflow: hidden;
  padding: 30px 38px 0;
  box-sizing: border-box;
}
.promo-card {
  height: 60px;
  border: 3px solid #f2c5bd;
  border-radius: 22px;
  background: #fff;
  padding: 11px 0 0 925px;
}
.promo-card i {
  display: block;
  width: 24px;
  height: 20px;
  border-radius: 50%;
  background: #d9a45a;
}
.actions {
  height: 136px;
  box-sizing: border-box;
  border-top: 2px solid #dcdee0;
  background: #f6f7fa;
  display: flex;
  color: #666;
  font-size: 31px;
}
.index {
  width: 275px;
  display: flex;
  flex-direction: column;
  align-items: center;
}
.up-caret {
  border: 10px solid transparent;
  border-bottom: 7px solid #888;
  border-top: 0;
  margin-top: 9px;
}
.index b {
  font-size: 34px;
  font-weight: 400;
  line-height: 64px;
  color: #d63333;
  letter-spacing: -0.3px;
}
.index p {
  width: 100%;
  box-sizing: border-box;
  padding: 0 16px 0 45px;
  line-height: 34px;
  display: flex;
  justify-content: space-between;
}
.index em {
  color: #d63333;
  font-size: 33px;
  letter-spacing: -1px;
}
.action {
  width: 201.300px;
  display: flex;
  flex-direction: column;
  align-items: center;
  line-height: 72px;
}
.action svg {
  width: 66px;
  height: 58px;
  margin-top: 9px;
}
.android {
  height: 126px;
  display: flex;
  justify-content: center;
  align-items: center;
  gap: 188px;
  padding-left: 2px;
}
</style>
